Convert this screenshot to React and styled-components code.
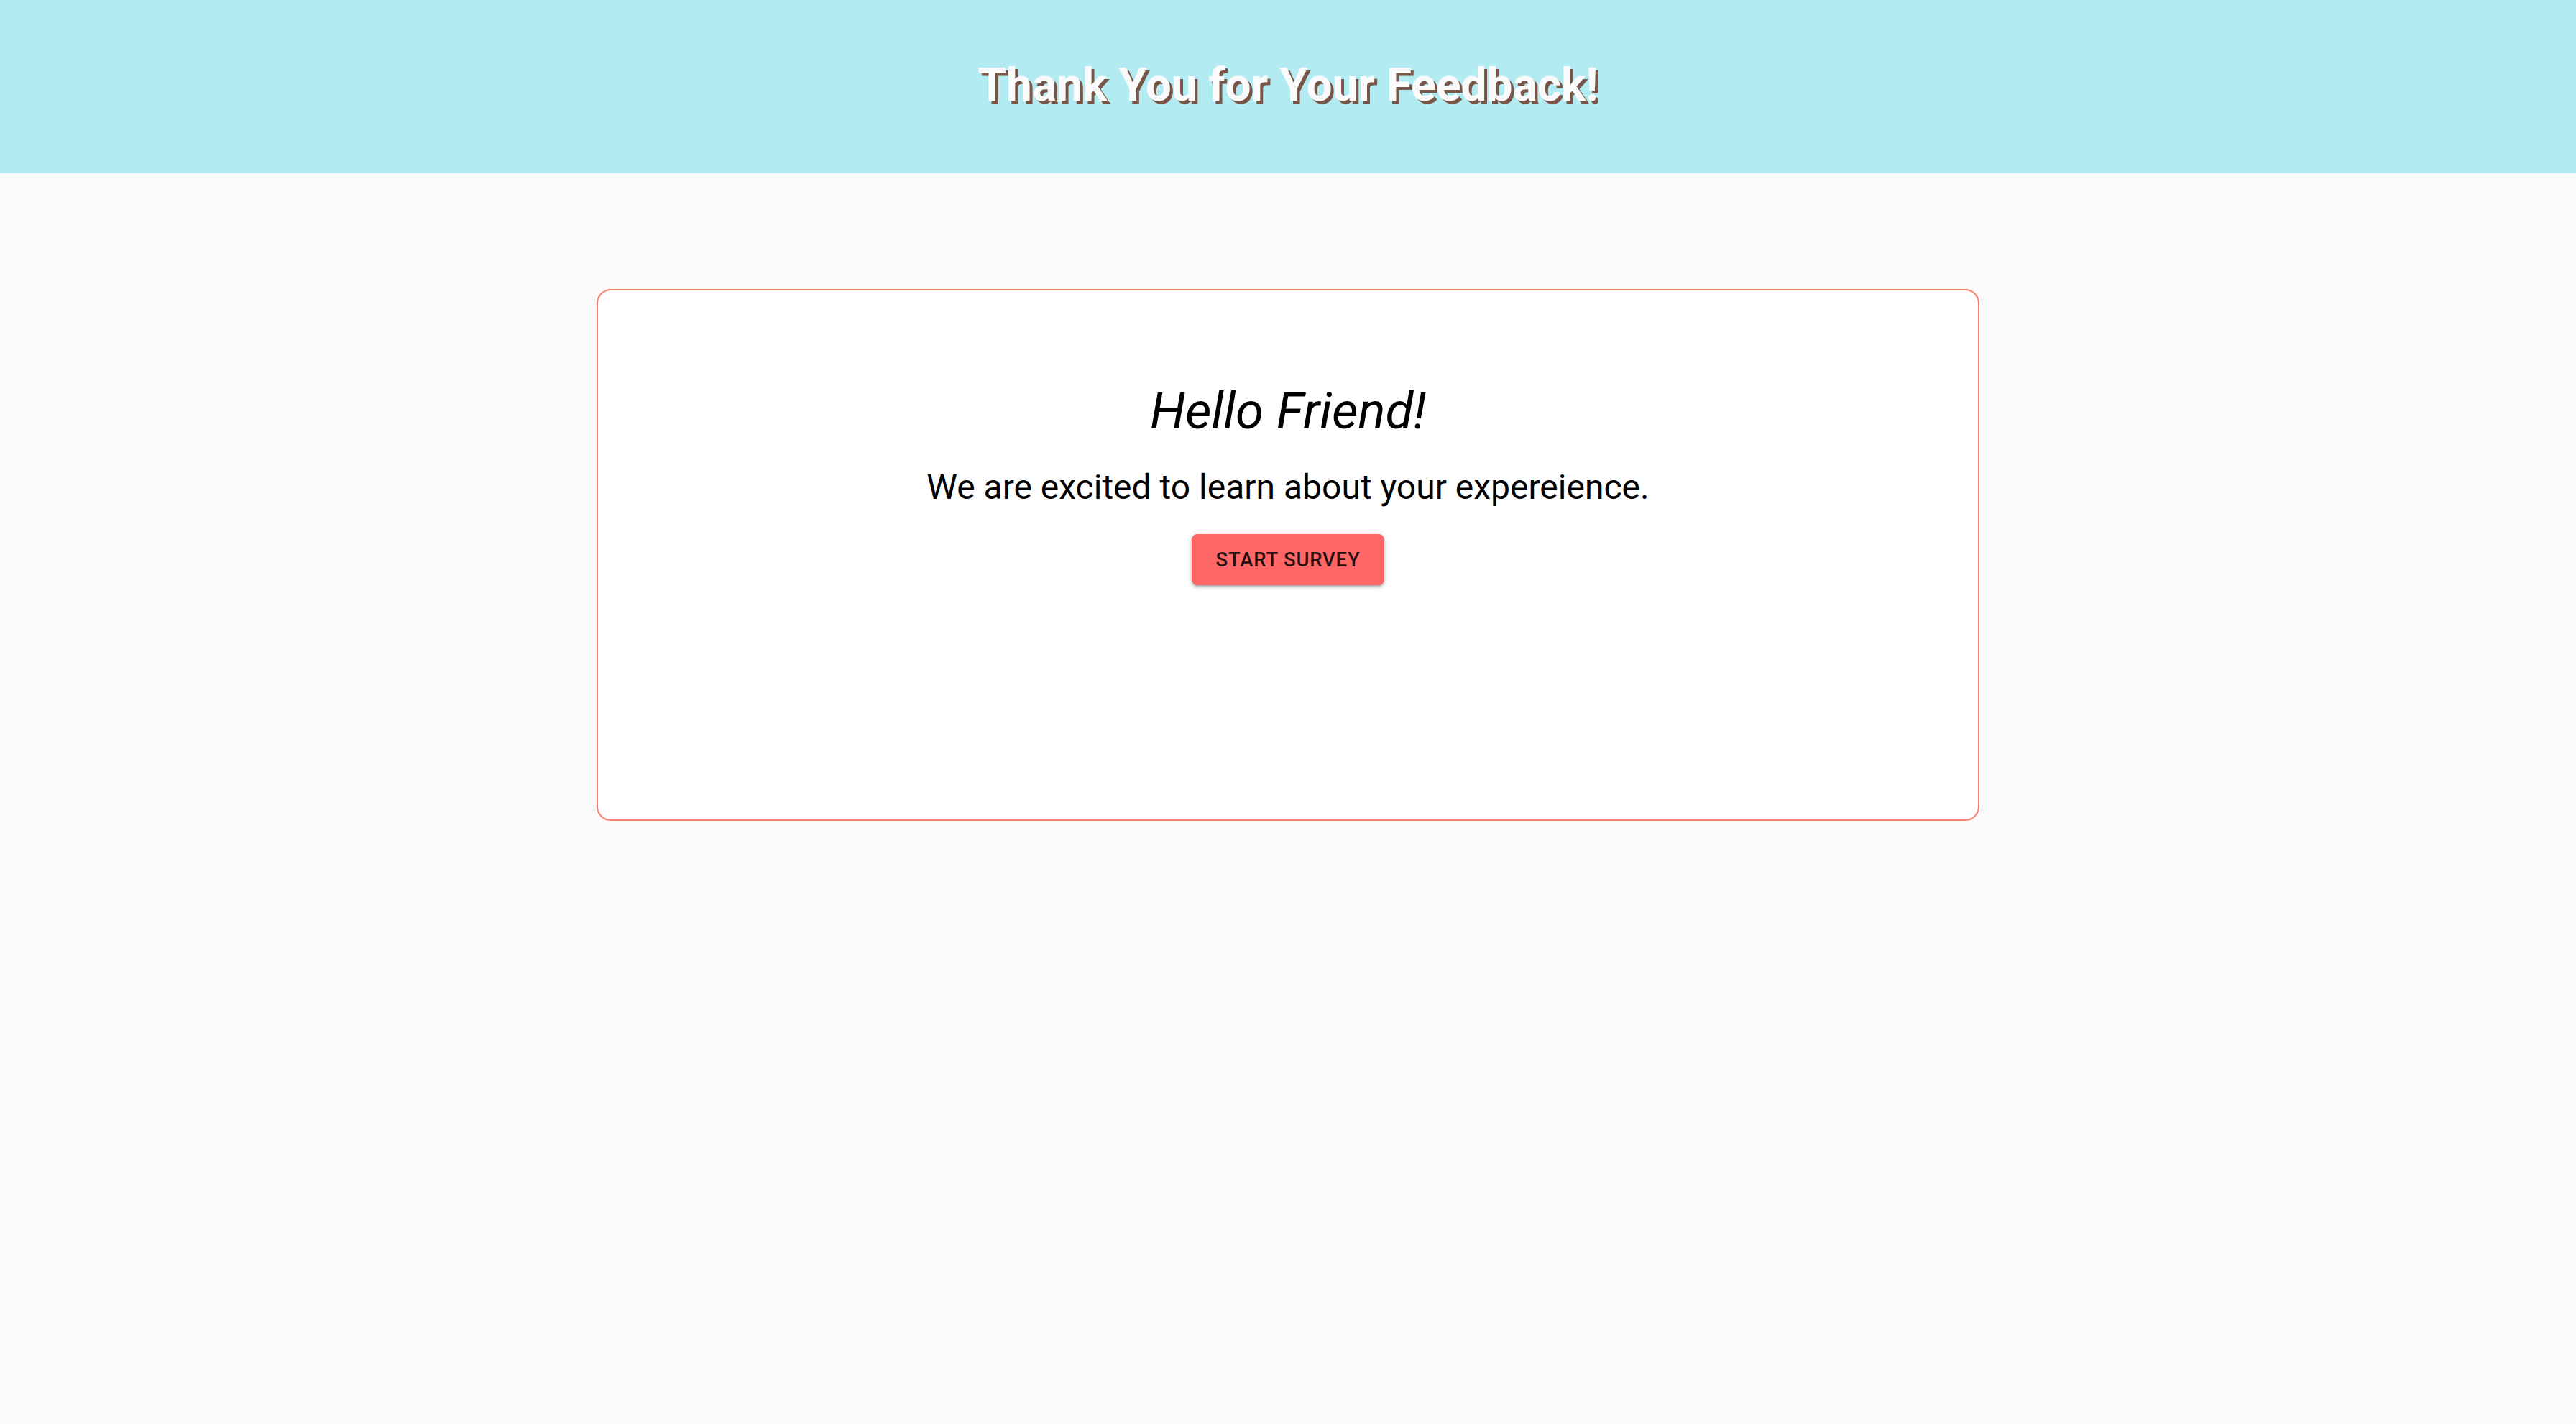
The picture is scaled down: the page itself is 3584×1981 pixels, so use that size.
import React from 'react';
import styled, { createGlobalStyle } from 'styled-components';

const GlobalStyle = createGlobalStyle`
  html, body {
    margin: 0;
    padding: 0;
    background: #fafafa;
    font-family: Roboto, "Liberation Sans", Arial, sans-serif;
  }
`;

const Page = styled.div`
  min-height: 100vh;
  background: #fafafa;
`;

const Header = styled.header`
  height: 241px;
  background: #b2ebf2;
  display: flex;
  align-items: flex-start;
  justify-content: center;
`;

const Title = styled.h1`
  margin: 0;
  padding-top: 87px;
  font-size: 64px;
  font-weight: 700;
  line-height: 1;
  color: #fafafa;
  text-shadow: 4px 4px 0 #795548;
`;

const Main = styled.main`
  display: flex;
  justify-content: center;
  padding-top: 161px;
`;

const Card = styled.section`
  box-sizing: border-box;
  width: 1924px;
  height: 740px;
  background: #fff;
  border: 2px solid #ff7b6b;
  border-radius: 20px;
  display: flex;
  flex-direction: column;
  align-items: center;
  padding-top: 132px;
`;

const Greeting = styled.h2`
  margin: 0;
  font-size: 71px;
  font-weight: 400;
  font-style: italic;
  line-height: 1;
  color: #000;
`;

const Lead = styled.p`
  margin: 0;
  margin-top: 47px;
  font-size: 48px;
  font-weight: 400;
  line-height: 1;
  color: #000;
`;

const Button = styled.button`
  margin-top: 41px;
  width: 268px;
  height: 71px;
  border: 0;
  border-radius: 8px;
  background: #ff6666;
  color: rgba(0, 0, 0, 0.87);
  font-family: inherit;
  font-size: 27.5px;
  font-weight: 500;
  letter-spacing: 0.02857em;
  text-transform: uppercase;
  cursor: pointer;
  box-shadow: 0px 3px 3px -2px rgba(0, 0, 0, 0.25), 0px 3px 4px 0px rgba(0, 0, 0, 0.16), 0px 1px 8px 0px rgba(0, 0, 0, 0.12);
`;

export default function App() {
  return (
    <Page>
      <GlobalStyle />
      <Header>
        <Title>Thank You for Your Feedback!</Title>
      </Header>
      <Main>
        <Card>
          <Greeting>Hello Friend!</Greeting>
          <Lead>We are excited to learn about your expereience.</Lead>
          <Button>Start Survey</Button>
        </Card>
      </Main>
    </Page>
  );
}
